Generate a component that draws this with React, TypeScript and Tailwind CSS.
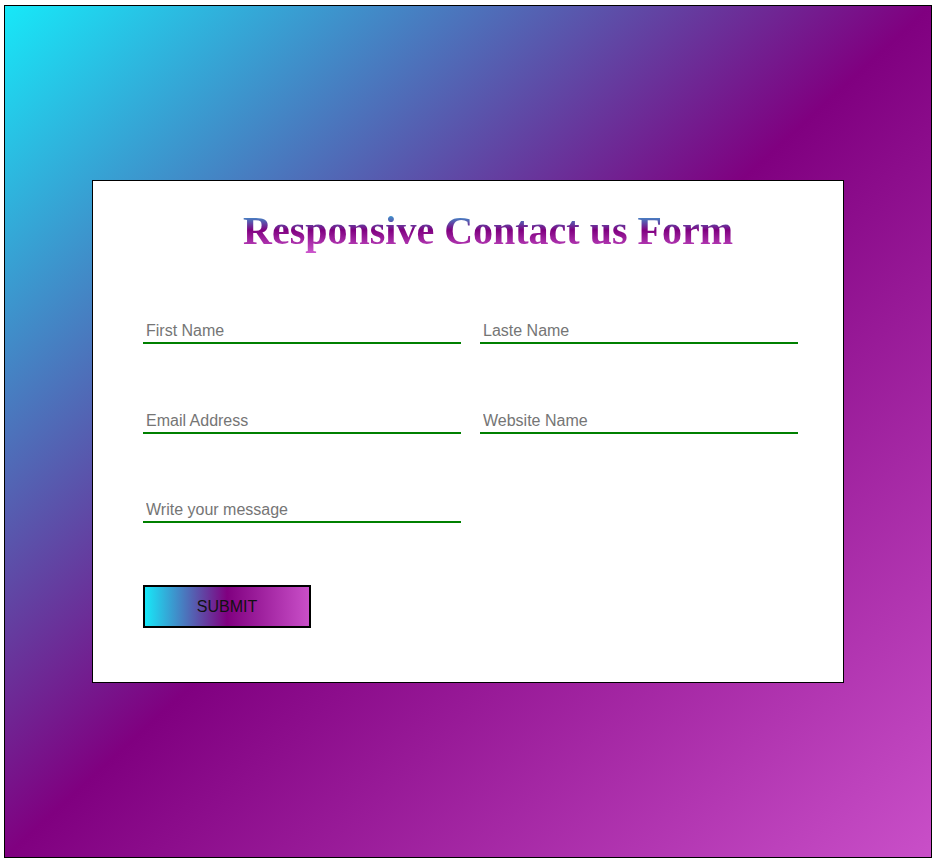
import React from "react";

const inputCls =
  "w-[318px] h-[24px] border-0 border-b-2 border-[#008000] px-[3px] py-[1px] text-[16px] leading-[normal] text-black bg-white outline-none placeholder:text-[#757575]";

export default function App() {
  return (
    <div className="w-[940px] h-[858px] bg-white pt-[5px] pl-[4px]" style={{ fontFamily: '"Liberation Sans", Arial, sans-serif' }}>
      <div className="w-[928px] h-[853px] border border-black bg-[linear-gradient(to_right_bottom,#17e8f8,#800080,#c94fc8)] flex items-center justify-center">
        <div className="w-[752px] h-[503px] border border-black bg-white pt-[27px]">
          <h1
            className="text-center pl-[40px] text-[40px] leading-[46px] font-bold"
            style={{ fontFamily: '"Liberation Serif", "Times New Roman", serif' }}
          >
            <span className="bg-[linear-gradient(to_bottom,#17e8f8_0%,#800080_48%,#d05ad0_100%)] bg-clip-text text-transparent inline-block">
              Responsive Contact us Form
            </span>
          </h1>
          <form className="pl-[50px] pt-[66px]" onSubmit={(e) => e.preventDefault()}>
            <div className="flex gap-[19px]">
              <input className={inputCls} placeholder="First Name" />
              <input className={inputCls} placeholder="Laste Name" />
            </div>
            <div className="flex gap-[19px] mt-[66px]">
              <input className={inputCls} placeholder="Email Address" />
              <input className={inputCls} placeholder="Website Name" />
            </div>
            <div className="flex mt-[65px]">
              <input className={inputCls} placeholder="Write your message" />
            </div>
            <button
              type="submit"
              className="mt-[62px] w-[168px] h-[43px] border-2 border-black bg-[linear-gradient(to_right,#17e8f8,#800080,#c94fc8)] text-[16px] text-[#111] flex items-center justify-center"
            >
              SUBMIT
            </button>
          </form>
        </div>
      </div>
    </div>
  );
}
